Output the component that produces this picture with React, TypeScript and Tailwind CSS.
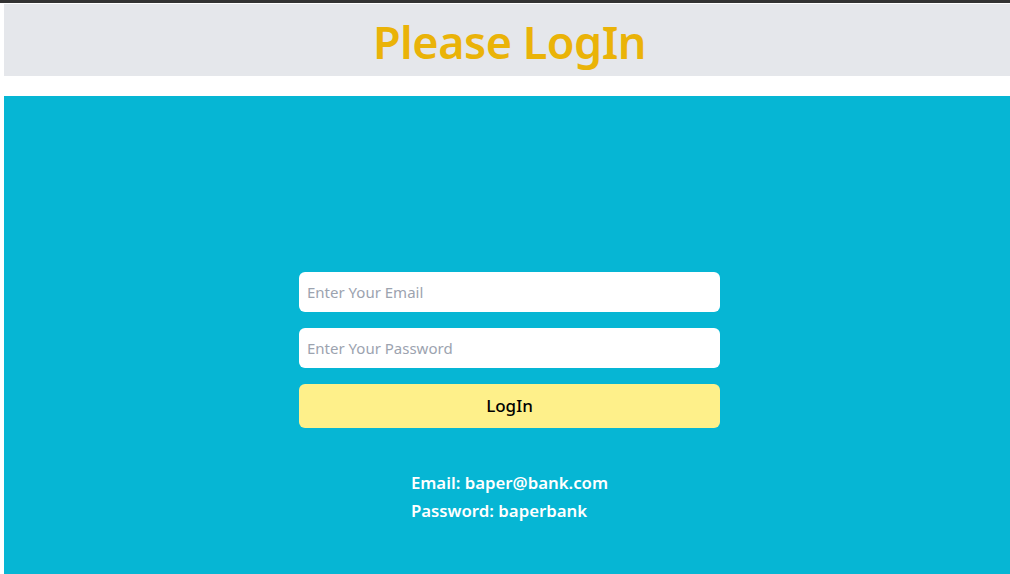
export default function App() {
  const font = { fontFamily: '"Noto Sans", "Open Sans", sans-serif' };
  return (
    <div className="min-h-[574px] bg-white" style={font}>
      <div className="h-[3px] bg-[#333333]" />
      <div className="pl-1 pt-px">
        <header className="h-[72px] bg-[#e5e7eb] flex items-center justify-center pl-[5px]">
          <h1 className="text-[45px] leading-none font-semibold text-[#eab308] tracking-[-0.5px] mt-[2px]">Please LogIn</h1>
        </header>
        <section className="mt-5 bg-[#06b6d4] min-h-[478px] pl-[5px] pt-[176px] flex flex-col items-center">
          <form className="w-[421px] flex flex-col gap-4" onSubmit={(e) => e.preventDefault()}>
            <input
              type="email"
              placeholder="Enter Your Email"
              className="h-10 w-full rounded-md bg-white px-2 text-[15px] text-gray-800 placeholder:text-[#9ca3af] outline-none"
            />
            <input
              type="password"
              placeholder="Enter Your Password"
              className="h-10 w-full rounded-md bg-white px-2 text-[15px] text-gray-800 placeholder:text-[#9ca3af] outline-none"
            />
            <button className="h-11 w-full rounded-md bg-[#fef08a] text-[17px] font-medium text-black">LogIn</button>
          </form>
          <div className="mt-[41px] text-left text-white font-semibold text-[16.8px] leading-[28px]">
            <p>Email: baper@bank.com</p>
            <p>Password: baperbank</p>
          </div>
        </section>
      </div>
    </div>
  );
}
